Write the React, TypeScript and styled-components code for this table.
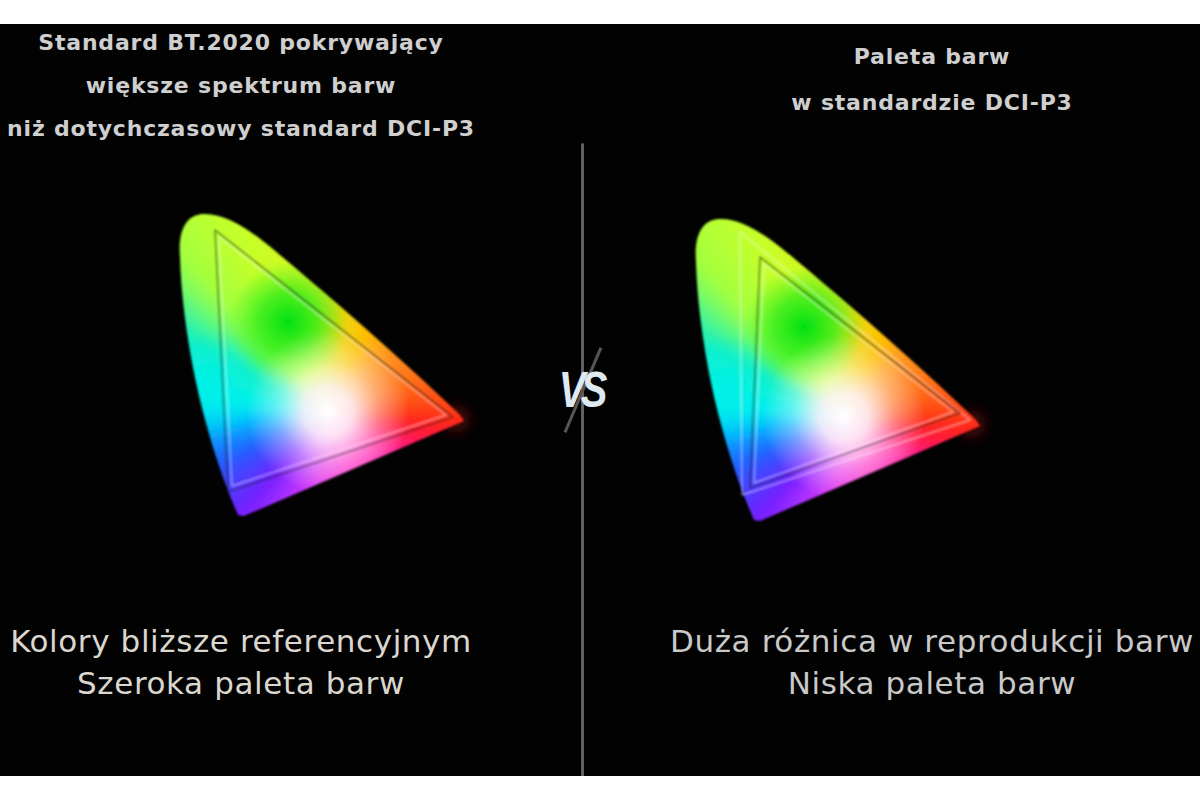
import React from "react";
import styled, { createGlobalStyle } from "styled-components";

const GlobalStyle = createGlobalStyle`
    html, body {
        margin: 0;
        padding: 0;
        background: #ffffff;
    }
    body {
        font-family: "DejaVu Sans", "Liberation Sans", sans-serif;
    }
`;

// hue around the white point, clockwise from "up"
const hueStops: [number, string][] = [
    [0, "#e0e418"],
    [25, "#ffc000"],
    [43, "#ff9a20"],
    [70, "#ff7018"],
    [86, "#ff4a14"],
    [95, "#ff2418"],
    [108, "#ff1850"],
    [120, "#ff2090"],
    [140, "#ff28b8"],
    [160, "#ff30c8"],
    [190, "#e038f0"],
    [205, "#b030ff"],
    [222, "#7020ff"],
    [246, "#2060ff"],
    [262, "#00b0ff"],
    [276, "#00f0f0"],
    [299, "#10f0c0"],
    [316, "#a0ff40"],
    [335, "#c8ff28"],
    [350, "#d4f420"],
    [360, "#e0e418"],
];

const toRgb = (hex: string) => [1, 3, 5].map(i => parseInt(hex.slice(i, i + 2), 16));

const hueAt = (deg: number) => {
    const d = ((deg % 360) + 360) % 360;
    for (let i = 0; i < hueStops.length - 1; i++) {
        const [a0, c0] = hueStops[i];
        const [a1, c1] = hueStops[i + 1];
        if (d >= a0 && d <= a1) {
            const t = (d - a0) / (a1 - a0);
            const p = toRgb(c0);
            const q = toRgb(c1);
            const m = p.map((v, k) => Math.round(v + (q[k] - v) * t));
            return `rgb(${m[0]},${m[1]},${m[2]})`;
        }
    }
    return hueStops[0][1];
};

const WHITE = { x: 158, y: 205 };
const STEP = 5;

const polar = (deg: number, r: number) => {
    const a = (deg * Math.PI) / 180;
    return `${(WHITE.x + r * Math.sin(a)).toFixed(1)},${(WHITE.y - r * Math.cos(a)).toFixed(1)}`;
};

const wedges = Array.from({ length: 360 / STEP }, (_, i) => ({
    points: `${WHITE.x},${WHITE.y} ${polar(i * STEP - 0.4, 420)} ${polar((i + 1) * STEP + 0.4, 420)}`,
    fill: hueAt(i * STEP + STEP / 2),
}));

const HORSESHOE =
    "M 33 7 C 15 8, 8 25, 10 50 C 12 120, 30 220, 68 308 L 74 309 L 294 214 L 290 208 C 230 150, 160 90, 110 48 C 80 22, 55 6, 33 7 Z";

type Gamut = { points: string; kind: "dark" | "light" };

type ChartProps = {
    id: string;
    gamuts: Gamut[];
    $left: number;
    $top: number;
};

const ChartSvg = styled.svg<{ $left: number; $top: number }>`
    display: block;
    width: 300px;
    height: 320px;
    margin: ${p => p.$top}px 0 0 ${p => p.$left}px;
    overflow: visible;
    flex: none;
`;

const GamutChart: React.FC<ChartProps> = ({ id, gamuts, $left, $top }) => (
    <ChartSvg viewBox="0 0 300 320" $left={$left} $top={$top}>
        <defs>
            <clipPath id={`${id}-clip`}>
                <path d={HORSESHOE} />
            </clipPath>
            <filter id={`${id}-mix`} x="-10%" y="-10%" width="120%" height="120%">
                <feGaussianBlur stdDeviation="6" />
            </filter>
            <filter id={`${id}-soft`} x="-5%" y="-5%" width="110%" height="110%">
                <feGaussianBlur stdDeviation="1.1" />
            </filter>
            <filter id={`${id}-glow`} x="-30%" y="-30%" width="160%" height="160%">
                <feGaussianBlur stdDeviation="6" />
            </filter>
            <radialGradient id={`${id}-white`} cx={WHITE.x} cy={WHITE.y} r="82" gradientUnits="userSpaceOnUse">
                <stop offset="0" stopColor="#ffffff" stopOpacity="1" />
                <stop offset="0.3" stopColor="#fff4fa" stopOpacity="0.9" />
                <stop offset="0.62" stopColor="#ffffff" stopOpacity="0.4" />
                <stop offset="1" stopColor="#ffffff" stopOpacity="0" />
            </radialGradient>
            <radialGradient id={`${id}-green`} cx="118" cy="115" r="60" gradientUnits="userSpaceOnUse">
                <stop offset="0" stopColor="#00e010" stopOpacity="1" />
                <stop offset="0.5" stopColor="#10e818" stopOpacity="0.65" />
                <stop offset="1" stopColor="#20f020" stopOpacity="0" />
            </radialGradient>
            <radialGradient id={`${id}-cyan`} cx="40" cy="178" r="55" gradientUnits="userSpaceOnUse">
                <stop offset="0" stopColor="#00f0e8" stopOpacity="0.85" />
                <stop offset="1" stopColor="#00f0e8" stopOpacity="0" />
            </radialGradient>
        </defs>
        <circle cx="286" cy="212" r="14" fill="#7a0a08" opacity="0.5" filter={`url(#${id}-glow)`} />
        <g filter={`url(#${id}-soft)`}>
            <g clipPath={`url(#${id}-clip)`}>
                <g filter={`url(#${id}-mix)`}>
                    {wedges.map((w, i) => (
                        <polygon key={i} points={w.points} fill={w.fill} />
                    ))}
                </g>
                <rect x="0" y="0" width="300" height="320" fill={`url(#${id}-cyan)`} />
                <rect x="0" y="0" width="300" height="320" fill={`url(#${id}-green)`} />
                <rect x="0" y="0" width="300" height="320" fill={`url(#${id}-white)`} />
            </g>
            {gamuts.map((g, i) => (
                <polygon
                    key={i}
                    points={g.points}
                    fill="none"
                    stroke={g.kind === "dark" ? "rgba(30,30,30,0.5)" : "rgba(255,255,255,0.42)"}
                    strokeWidth={g.kind === "dark" ? 1.8 : 1.4}
                    strokeLinejoin="round"
                />
            ))}
        </g>
    </ChartSvg>
);

const Page = styled.main`
    width: 1200px;
    height: 800px;
    padding: 24px 0;
    box-sizing: border-box;
    background: #ffffff;
`;

const Board = styled.section`
    display: grid;
    grid-template-columns: 581px 3px 1fr;
    height: 752px;
    background: #020203;
    overflow: hidden;
`;

const Panel = styled.div`
    display: flex;
    flex-direction: column;
    min-width: 0;
    padding-bottom: 72px;
`;

const Caption = styled.div<{ $width: number; $offset: number; $pitch: number; $top: number }>`
    width: ${p => p.$width}px;
    margin: ${p => p.$top}px 0 0 ${p => p.$offset}px;
    color: #cfcfcf;
    font-size: 22px;
    font-weight: 700;
    letter-spacing: 0.8px;
    line-height: ${p => p.$pitch}px;
    text-align: center;
    white-space: nowrap;
`;

const Verdict = styled.div<{ $width: number; $offset: number; $tint: string }>`
    width: ${p => p.$width}px;
    margin: auto 0 0 ${p => p.$offset}px;
    color: ${p => p.$tint};
    font-size: 31px;
    font-weight: 400;
    letter-spacing: 0.6px;
    line-height: 42px;
    text-align: center;
    white-space: nowrap;
`;

const Divider = styled.div`
    position: relative;
    margin-top: 119px;
    width: 3px;
    border-radius: 2px 2px 0 0;
    background: #616161;
`;

const VsBadge = styled.div`
    position: absolute;
    left: 50%;
    top: 247px;
    transform: translate(-50%, -50%);
    width: 60px;
    height: 90px;
    display: flex;
    align-items: center;
    justify-content: center;

    &::before {
        content: "";
        position: absolute;
        left: 50%;
        top: 50%;
        width: 3px;
        height: 92px;
        background: #555555;
        transform: translate(-50%, -50%) rotate(23deg);
    }
`;

const VsText = styled.span`
    position: relative;
    color: #dfe9f2;
    font-family: "Liberation Sans", "DejaVu Sans", sans-serif;
    font-size: 50px;
    font-weight: 700;
    font-style: italic;
    letter-spacing: -6px;
    line-height: 1;
    transform: scaleX(0.8) translateX(-2px);
`;

const App: React.FC = () => {
    return (
        <>
            <GlobalStyle />
            <Page>
                <Board>
                    <Panel>
                        <Caption $width={482} $offset={0} $pitch={43} $top={-3}>
                            <div>Standard BT.2020 pokrywający</div>
                            <div>większe spektrum barw</div>
                            <div>niż dotychczasowy standard DCI-P3</div>
                        </Caption>
                        <GamutChart
                            id="bt2020"
                            $left={170}
                            $top={57}
                            gamuts={[
                                { points: "45,23 58,285 283,210", kind: "dark" },
                                { points: "49,30 62,279 276,208", kind: "light" },
                            ]}
                        />
                        <Verdict $width={482} $offset={0} $tint="#dbd7cf">
                            <div>Kolory bliższe referencyjnym</div>
                            <div>Szeroka paleta barw</div>
                        </Verdict>
                    </Panel>

                    <Divider>
                        <VsBadge>
                            <VsText>VS</VsText>
                        </VsBadge>
                    </Divider>

                    <Panel>
                        <Caption $width={536} $offset={80} $pitch={46} $top={10}>
                            <div>Paleta barw</div>
                            <div>w standardzie DCI-P3</div>
                        </Caption>
                        <GamutChart
                            id="dcip3"
                            $left={102}
                            $top={86}
                            gamuts={[
                                { points: "54,20 56,283 284,208", kind: "light" },
                                { points: "74,45 64,276 274,201", kind: "dark" },
                                { points: "78,52 68,271 267,200", kind: "light" },
                            ]}
                        />
                        <Verdict $width={536} $offset={80} $tint="#c9c9c9">
                            <div>Duża różnica w reprodukcji barw</div>
                            <div>Niska paleta barw</div>
                        </Verdict>
                    </Panel>
                </Board>
            </Page>
        </>
    );
};

export default App;
